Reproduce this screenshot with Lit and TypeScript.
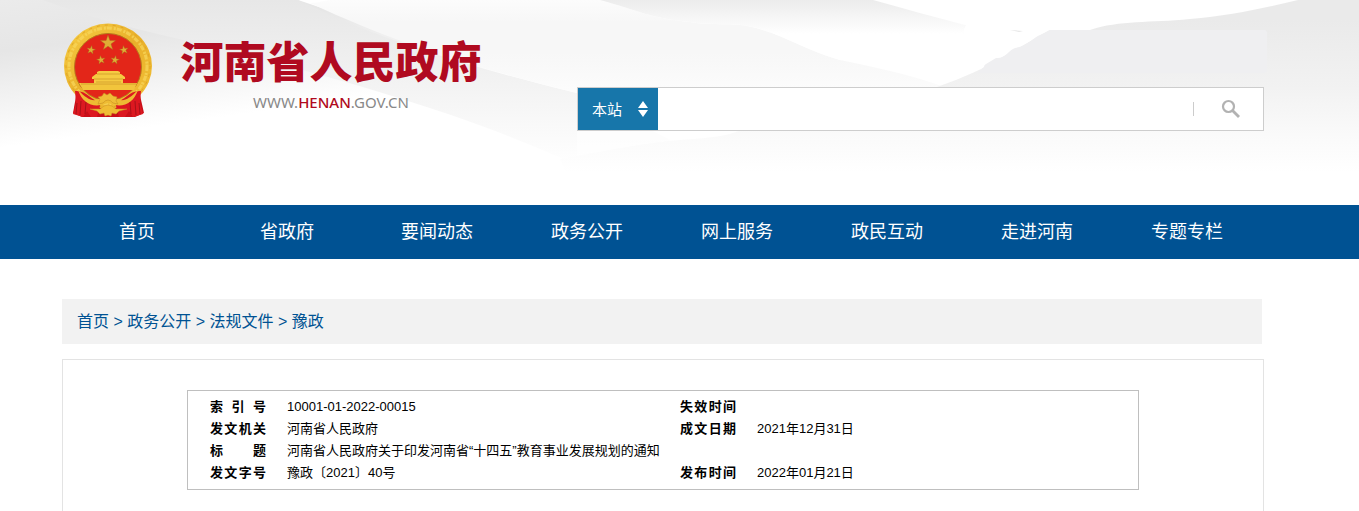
import { LitElement, html, css, svg } from "lit";
import { customElement } from "lit/decorators.js";

const star = (cx: number, cy: number, r: number, turn = 0) => {
  const pts: string[] = [];
  for (let i = 0; i < 10; i++) {
    const rad = i % 2 ? r * 0.4 : r;
    const a = ((i * 36 - 90 + turn) * Math.PI) / 180;
    pts.push(`${(cx + rad * Math.cos(a)).toFixed(1)},${(cy + rad * Math.sin(a)).toFixed(1)}`);
  }
  return svg`<polygon points=${pts.join(" ")} fill="#dfae35" stroke="#a86a1c" stroke-width="0.4"/>`;
};

@customElement("site-backdrop")
class SiteBackdrop extends LitElement {
  static styles = css`
    :host { display: block; }
    .art { display: block; width: 100%; height: 100%; }
  `;
  render() {
    return html`<svg class="art" viewBox="0 0 1359 205" preserveAspectRatio="none" aria-hidden="true">
      <defs>
        <linearGradient id="corner" gradientUnits="userSpaceOnUse" x1="0" y1="0" x2="20" y2="145">
          <stop offset="0" stop-color="#ebebeb"/><stop offset="0.35" stop-color="#e6e6e6"/><stop offset="1" stop-color="#ffffff"/>
        </linearGradient>
        <linearGradient id="sweep" gradientUnits="userSpaceOnUse" x1="300" y1="0" x2="300" y2="165">
          <stop offset="0" stop-color="#e7e7e7"/><stop offset="0.4" stop-color="#f0f0f0"/><stop offset="1" stop-color="#ffffff"/>
        </linearGradient>
        <linearGradient id="pale" gradientUnits="userSpaceOnUse" x1="0" y1="0" x2="0" y2="150">
          <stop offset="0" stop-color="#fcfcfc"/><stop offset="0.15" stop-color="#f7f7f7"/><stop offset="0.35" stop-color="#f7f7f7"/><stop offset="0.6" stop-color="#fcfcfc"/><stop offset="1" stop-color="#ffffff"/>
        </linearGradient>
        <linearGradient id="top" gradientUnits="userSpaceOnUse" x1="800" y1="0" x2="800" y2="34">
          <stop offset="0" stop-color="#ececec"/><stop offset="1" stop-color="#ffffff"/>
        </linearGradient>
        <linearGradient id="right" gradientUnits="userSpaceOnUse" x1="1190" y1="20" x2="1190" y2="172">
          <stop offset="0" stop-color="#eaeaea"/><stop offset="0.45" stop-color="#f2f2f2"/><stop offset="0.75" stop-color="#fafafa"/><stop offset="1" stop-color="#ffffff"/>
        </linearGradient>
      </defs>
      <rect width="1359" height="205" fill="#ffffff"/>
      <path d="M0 0H298L577 93V205H0Z" fill="url(#corner)"/>
      <path d="M43 0H298C350 25 420 55 577 93L700 130V165H577C480 120 350 80 200 44C140 30 90 18 43 0Z" fill="url(#sweep)"/>
      <path d="M310 3C316 3 322 1 330 0H600C640 11 650 18 690 22C712 26 735 22 752 27C785 35 805 50 840 60C880 68 910 75 945 87L740 150H690L577 93C470 66 400 45 310 3Z" fill="url(#pale)"/>
      <path d="M600 0H873C905 9 935 17 965 25L1021 31L1000 60H840C805 50 785 35 752 27C735 22 712 26 690 22C650 18 640 11 600 0Z" fill="url(#top)"/>
      <path d="M577 131H740C730 136 710 138 680 140C640 144 610 150 577 157Z" fill="#ffffff" fill-opacity="0.6"/>
      <path d="M1298 0H1359V173H566L560 159C610 150 640 144 680 140C710 138 730 136 740 130H860L937 87C965 77 985 68 1001 58L1050 30H1090C1120 20 1150 23 1190 19C1230 16 1265 8 1298 0Z" fill="url(#right)"/>
      <path d="M1050 30H1264Q1267 30 1267 33V70Q1267 73 1264 73H977L984 67Q984 65 986 64L996 58C1005 59 1009 50 1015 48C1028 46 1034 37 1040 35Z" fill="#efeff1"/>
      <path d="M968 24H1024V40H968Q964 38 964 32Q964 26 968 24Z" fill="#ffffff"/>
      <path d="M1010 30L1023 31L1019 32Z" fill="#e6e6e6"/>
    </svg>`;
  }
}

@customElement("state-emblem")
class StateEmblem extends LitElement {
  static styles = css`
    :host { display: block; width: 90px; height: 96px; }
    .art { display: block; width: 100%; height: 100%; }
  `;
  render() {
    return html`<svg class="art" viewBox="0 0 90 96" role="img" aria-label="国徽">
      <defs>
        <linearGradient id="gold" x1="0" y1="0" x2="1" y2="1">
          <stop offset="0" stop-color="#f7cf45"/><stop offset="0.5" stop-color="#e9b02b"/><stop offset="1" stop-color="#f2c136"/>
        </linearGradient>
      </defs>
      <path d="M14 68L10 90L19 94H72L81 90L76 68Z" fill="#c90f18"/>
      <ellipse cx="45" cy="43" rx="44" ry="42.5" fill="url(#gold)"/>
      <ellipse cx="45" cy="43" rx="39" ry="38" fill="none" stroke="#f8d75c" stroke-width="3" stroke-dasharray="5 2 2 1" stroke-opacity="0.7"/>
      <ellipse cx="45" cy="43" rx="42" ry="41" fill="none" stroke="#dfa527" stroke-width="1" stroke-dasharray="3 5"/>
      <ellipse cx="45" cy="44" rx="33.5" ry="33.5" fill="#e32619" stroke="#b77a1c" stroke-width="1"/>
      ${star(45, 20, 8)} ${star(28, 27, 4.5, 10)} ${star(61, 27, 4.5, -10)} ${star(38, 37, 4.5, -10)} ${star(52, 37, 4.5, 10)}
      <path d="M16 60H74L71 67H20Z" fill="#f2c53c"/>
      <path d="M31 56H60V61H31ZM33 52H58V56H33ZM29 54L33 51H58L62 54V56H29ZM34 49L36 48H55L57 49V51H34Z" fill="#f5cb42"/>
      <path d="M31 56H60M34 51H57M18 61H73M33 59H58" stroke="#c58a22" stroke-width="0.6" fill="none"/>
      <path d="M12 68C24 67 28 78 38 79L34 94H28L24 88L20 94L10 91L13 80Z" fill="#dc1820"/>
      <path d="M78 68C66 67 62 78 52 79L56 94H62L66 88L70 94L80 91L77 80Z" fill="#dc1820"/>
      <path d="M14 80L13 91M18 78L17 92M23 79L22 91M76 80L77 91M72 78L73 92M67 79L68 91" stroke="#990f16" stroke-width="0.8" fill="none"/>
      <path d="M15 67C24 76 29 79 36 76C40 74 41 73 45 73C49 73 50 74 54 76C61 79 66 76 75 67C71 79 62 84 52 82L45 80L38 82C28 84 19 79 15 67Z" fill="#eebb33"/>
      <path d="M35 81L37 76L35 74L39 73L41 70L44 72L47 70L50 73L54 74L53 78L55 81L50 80Q45 74 40 80Z" fill="#efbe37" stroke="#c88e22" stroke-width="0.6"/>
      <path d="M27 86L37 86L41 83L45 82L49 83L53 86L64 86L56 88L53 91L49 90L48 93L45 92L42 93L41 90L37 91L34 88Z" fill="#f0bc33" stroke="#c88e22" stroke-width="0.5"/>
    </svg>`;
  }
}

@customElement("app-root")
class AppRoot extends LitElement {
  static styles = css`
    :host {
      display: flex; flex-direction: column; min-height: 100vh; background: #fff; color: #000;
      font-family: "Liberation Sans", "Noto Sans CJK SC", sans-serif; font-size: 13px;
    }
    * { box-sizing: border-box; }
    a { color: inherit; text-decoration: none; }
    .header { display: grid; height: 205px; }
    .header > * { grid-area: 1 / 1; min-width: 0; }
    .inner { padding: 0 95px 0 62px; }
    .masthead { display: flex; align-items: flex-start; z-index: 1; }
    .emblem { flex: none; margin: 23px 0 0 1px; }
    .brand { flex: none; width: 302px; margin: 35px 0 0 27px; text-align: center; color: #b00a20; }
    .title { margin: 0; font: 900 43px/48px "Noto Sans CJK SC", sans-serif; white-space: nowrap; }
    .url { margin: 8px 0 0; font: 15px/22px "Noto Sans", sans-serif; color: #888; }
    .url b { color: #b00a20; font-weight: 500; }
    .search { flex: 1; display: flex; height: 44px; margin: 87px 0 0 95px; border: 1px solid #cdcdcd; background: #fff; }
    .scope { display: grid; flex: none; width: 80px; background: #1776aa; }
    .scope > * { grid-area: 1 / 1; }
    .scope select { appearance: none; border: 0; background: none; color: #fff; padding: 0 0 0 14px; font: inherit; font-size: 15px; width: 100%; }
    .scope svg { justify-self: end; align-self: center; margin-right: 9px; pointer-events: none; }
    .query { flex: 1; min-width: 0; border: 0; padding: 0 12px; font: inherit; font-size: 15px; background: none; }
    .go { display: flex; align-items: center; justify-content: space-between; width: 70px; padding: 0 22px 0 0; border: 0; background: none; }
    .go::before { content: ""; width: 1px; height: 14px; background: #ccc; }
    .nav { background: #005293; }
    .menu { display: grid; grid-template-columns: repeat(8, 1fr); margin: 0 2px 0 0; padding: 0; list-style: none; }
    .menu a { display: block; text-align: center; color: #fff; font-size: 18px; line-height: 54px; }
    .page { flex: 1; display: flex; flex-direction: column; gap: 15px; padding-top: 40px; }
    .crumbs { margin-right: 2px; padding: 0 15px; background: #f2f2f2; color: #005293; font-size: 16px; line-height: 45px; }
    .panel { flex: 1; border: 1px solid #e3e3e3; border-bottom: 0; padding: 30px 124px; }
    .facts { border: 1px solid #bfbfbf; padding: 5px 0 5px 22px; }
    .table { width: 100%; border-collapse: collapse; table-layout: fixed; line-height: 22px; }
    .table th, .table td { height: 22px; padding: 0; text-align: left; vertical-align: middle; }
    .table th { font-weight: 700; }
    .label { display: block; width: 56px; text-align: justify; text-align-last: justify; }
    .c-label { width: 77px; }
    .c-value { width: 393px; }
  `;

  private menu = ["首页", "省政府", "要闻动态", "政务公开", "网上服务", "政民互动", "走进河南", "专题专栏"];
  private trail = ["首页", "政务公开", "法规文件", "豫政"];
  private facts = [
    ["索引号", "10001-01-2022-00015", "失效时间", ""],
    ["发文机关", "河南省人民政府", "成文日期", "2021年12月31日"],
    ["标题", "河南省人民政府关于印发河南省“十四五”教育事业发展规划的通知"],
    ["发文字号", "豫政〔2021〕40号", "发布时间", "2022年01月21日"],
  ];

  render() {
    return html`
      <header class="header">
        <site-backdrop></site-backdrop>
        <div class="masthead inner">
          <state-emblem class="emblem"></state-emblem>
          <div class="brand">
            <h1 class="title">河南省人民政府</h1>
            <p class="url">WWW.<b>HENAN</b>.GOV.CN</p>
          </div>
          <form class="search" role="search" @submit=${(e: Event) => e.preventDefault()}>
            <div class="scope">
              <select aria-label="搜索范围"><option>本站</option></select>
              <svg width="12" height="16" viewBox="0 0 12 16" fill="#fff" aria-hidden="true"><path d="M6 0L11 7H1ZM1 9H11L6 16Z"/></svg>
            </div>
            <input class="query" type="text" aria-label="搜索" />
            <button class="go" aria-label="搜索">
              <svg width="20" height="20" viewBox="0 0 20 20" fill="none" stroke="#b2b2b2" aria-hidden="true">
                <circle cx="7.5" cy="7.5" r="5.5" stroke-width="2.2"/><path d="M11.5 11.5L18 18" stroke-width="2.8"/>
              </svg>
            </button>
          </form>
        </div>
      </header>
      <nav class="nav inner" aria-label="主导航">
        <ul class="menu">${this.menu.map((m) => html`<li><a href="#">${m}</a></li>`)}</ul>
      </nav>
      <main class="page inner">
        <nav class="crumbs" aria-label="当前位置">${this.trail.map((t, i) => html`${i ? " > " : ""}<a href="#">${t}</a>`)}</nav>
        <section class="panel">
          <div class="facts">
            <table class="table">
              <colgroup><col class="c-label" /><col class="c-value" /><col class="c-label" /><col /></colgroup>
              <tbody>
                ${this.facts.map(([a, b, c, d]) => html`<tr>
                  <th scope="row"><span class="label">${a}</span></th>
                  ${c
                    ? html`<td>${b}</td><th scope="row"><span class="label">${c}</span></th><td>${d}</td>`
                    : html`<td colspan="3">${b}</td>`}
                </tr>`)}
              </tbody>
            </table>
          </div>
        </section>
      </main>`;
  }
}
